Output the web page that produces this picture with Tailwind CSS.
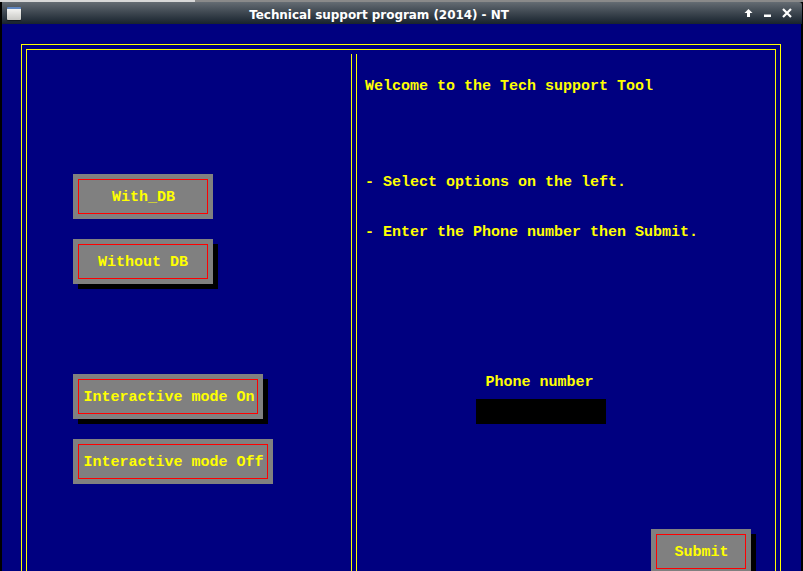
<!DOCTYPE html>
<html>
<head>
<meta charset="utf-8">
<script src="https://cdn.jsdelivr.net/npm/@tailwindcss/browser@4"></script>
</head>
<body class="m-0 bg-black">
<div class="relative w-[803px] h-[571px] overflow-hidden flex flex-col bg-black font-['Liberation_Mono',monospace] font-bold text-[15px] leading-[18px] text-[#ffff00]">
  <div class="h-[2px] shrink-0 flex">
    <div class="w-[195px] bg-[#d8d8d8]"></div>
    <div class="flex-1 bg-[#8a8a8a]"></div>
  </div>
  <header class="h-[22px] shrink-0 ml-[2px] mr-[1px] flex items-center justify-between pl-[5px] pr-[10px] bg-gradient-to-b from-[#656c73] to-[#18232e] rounded-tr-[3px]">
    <div class="w-[14px] h-[13px] rounded-[1px] bg-gradient-to-b from-[#f4f4f2] to-[#c8c8c4] border-t-2 border-[#5f86c0] shadow-[0_1px_1px_#10161c]"></div>
    <div class="text-white font-['DejaVu_Sans',sans-serif] text-[12px] font-bold leading-[22px] tracking-[-0.05px] whitespace-nowrap mr-[7px] mt-[4px]">Technical support program (2014) - NT</div>
    <div class="flex items-center gap-[11px]">
      <svg width="9" height="10" viewBox="0 0 9 10"><path d="M0.5 5 L4.5 1 L8.5 5 H6 V9 H3 V5 Z" fill="#fff"/></svg>
      <svg width="7" height="10" viewBox="0 0 7 10"><rect x="0" y="6.5" width="7" height="2.5" fill="#fff"/></svg>
      <svg width="10" height="10" viewBox="0 0 10 10"><path d="M1 1 L9 9 M9 1 L1 9" stroke="#fff" stroke-width="2.2" fill="none"/></svg>
    </div>
  </header>
  <main class="flex-1 min-h-0 ml-[2px] mr-[2px] bg-[#000080] pl-[19px] pt-[20px]">
    <div class="h-[600px] border border-[#ffff00] p-[4px] pb-0 w-[760px]">
      <div class="h-full border border-[#ffff00] pt-[4px] flex">
        <section class="w-[324px] shrink-0 flex flex-col items-start pl-[46px] pt-[120px]">
          <div class="w-[140px] h-[45px] bg-[#808080] p-[5px]">
            <div class="h-full border border-[#ff0000] flex items-center justify-center pt-[3px] pl-[1px]">With_DB</div>
          </div>
          <div class="mt-[20px] w-[140px] h-[45px] bg-[#808080] p-[5px] shadow-[5px_5px_0_#000]">
            <div class="h-full border border-[#ff0000] flex items-center justify-center pt-[3px]">Without DB</div>
          </div>
          <div class="mt-[90px] w-[190px] h-[45px] bg-[#808080] p-[5px] shadow-[5px_5px_0_#000]">
            <div class="h-full border border-[#ff0000] flex items-center justify-center pt-[3px] pl-[2px] whitespace-nowrap">Interactive mode On</div>
          </div>
          <div class="mt-[20px] w-[200px] h-[45px] bg-[#808080] p-[5px]">
            <div class="h-full border border-[#ff0000] flex items-center justify-center pt-[3px] pl-[1px] whitespace-nowrap">Interactive mode Off</div>
          </div>
        </section>
        <div class="w-[6px] shrink-0 border-x border-[#ffff00]"></div>
        <section class="flex-1 pl-[8px] flex flex-col whitespace-nowrap">
          <p class="mt-[24px]">Welcome to the Tech support Tool</p>
          <p class="mt-[78px]">- Select options on the left.</p>
          <p class="mt-[32px]">- Enter the Phone number then Submit.</p>
          <div class="mt-[132px] ml-[111px] w-[130px] flex flex-col items-center">
            <p class="pr-[3px]">Phone number</p>
            <div class="mt-[7px] w-[130px] h-[25px] bg-black"></div>
          </div>
          <div class="mt-[105px] ml-[286px] w-[100px] h-[45px] bg-[#808080] p-[5px] shadow-[5px_5px_0_#000]">
            <div class="h-full border border-[#ff0000] flex items-center justify-center pt-[3px] pl-[1px]">Submit</div>
          </div>
        </section>
      </div>
    </div>
  </main>
</div>
</body>
</html>
